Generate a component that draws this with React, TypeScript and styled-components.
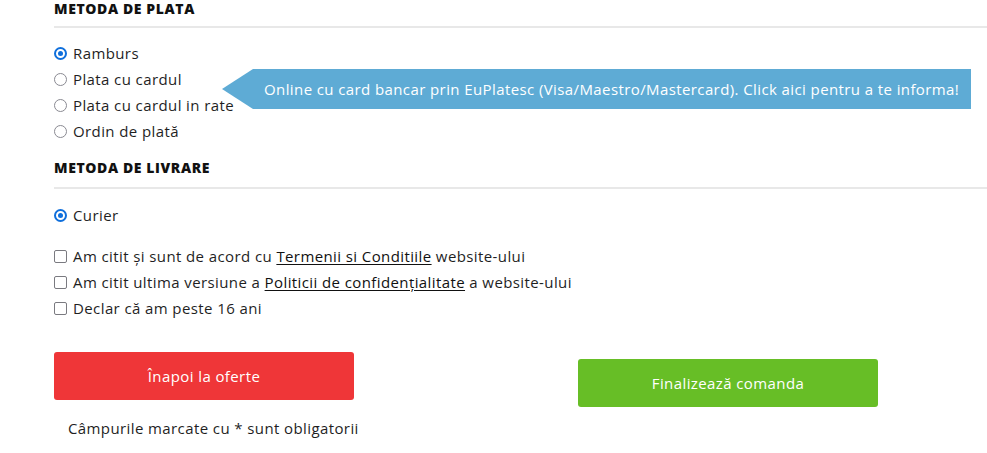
import React from "react";
import styled, { createGlobalStyle } from "styled-components";

const Global = createGlobalStyle`
  html, body { margin: 0; padding: 0; background: #fff; }
  body {
    font-family: "Open Sans", "Noto Sans", Arial, sans-serif;
    color: #1f1f1f;
    letter-spacing: 0.4px;
  }
  * { box-sizing: border-box; }
`;

const Page = styled.div`
  width: 987px;
  height: 453px;
  overflow: hidden;
  padding: 0 0 0 54px;
`;

const Heading = styled.h3<{ $top: number; $gap: number }>`
  margin: ${(p) => p.$top}px 0 0;
  padding: 0 0 ${(p) => p.$gap}px;
  font-size: 14px;
  line-height: 18px;
  font-weight: 800;
  letter-spacing: 0.6px;
  color: #111;
  border-bottom: 2px solid #e8e8e8;
`;

const OptionList = styled.div<{ $top: number }>`
  position: relative;
  display: flex;
  flex-direction: column;
  margin-top: ${(p) => p.$top}px;
`;

const Row = styled.label`
  display: flex;
  align-items: center;
  gap: 6px;
  height: 26px;
  font-size: 15px;
  color: #1f1f1f;
`;

const Text = styled.span`
  white-space: pre;
`;

const Radio = styled.span<{ $checked?: boolean }>`
  width: 13px;
  height: 13px;
  border-radius: 50%;
  flex: none;
  border: ${(p) => (p.$checked ? "2px solid #0f6fdc" : "1px solid #8a8a92")};
  display: flex;
  align-items: center;
  justify-content: center;
  &::after {
    content: "";
    display: ${(p) => (p.$checked ? "block" : "none")};
    width: 5px;
    height: 5px;
    border-radius: 50%;
    background: #0f6fdc;
  }
`;

const Box = styled.span`
  width: 13px;
  height: 13px;
  flex: none;
  border: 1px solid #7a7a80;
  border-radius: 2px;
`;

const Link = styled.a`
  color: #111;
  text-decoration: underline;
  text-underline-offset: 2px;
`;

const Tooltip = styled.div`
  position: absolute;
  left: 168px;
  top: 29px;
  height: 40px;
  display: flex;
  align-items: center;
`;

const Arrow = styled.span`
  width: 0;
  height: 0;
  border-top: 20px solid transparent;
  border-bottom: 20px solid transparent;
  border-right: 31px solid #5eabd5;
`;

const TipBody = styled.div`
  height: 40px;
  width: 718px;
  background: #5eabd5;
  color: #fff;
  font-size: 15px;
  display: flex;
  align-items: center;
  padding-left: 11px;
  white-space: nowrap;
`;

const Actions = styled.div`
  display: flex;
  align-items: flex-start;
  gap: 224px;
  margin-top: 31px;
`;

const LeftCol = styled.div`
  width: 300px;
  flex: none;
  display: flex;
  flex-direction: column;
`;

const Button = styled.button<{ $color: string; $offset?: number }>`
  width: 300px;
  height: 48px;
  flex: none;
  margin-top: ${(p) => p.$offset ?? 0}px;
  border: none;
  border-radius: 3px;
  background: ${(p) => p.$color};
  color: #fff;
  font-family: inherit;
  letter-spacing: inherit;
  font-size: 15px;
`;

const Note = styled.div`
  margin-top: 19px;
  padding-left: 14px;
  font-size: 15px;
  line-height: 18px;
  white-space: nowrap;
  color: #1f1f1f;
`;

export default function App() {
  return (
    <Page>
      <Global />
      <Heading $top={0} $gap={8}>METODA DE PLATA</Heading>
      <OptionList $top={12}>
        <Row><Radio $checked /><Text>Ramburs</Text></Row>
        <Row><Radio /><Text>Plata cu cardul</Text></Row>
        <Row><Radio /><Text>Plata cu cardul in rate</Text></Row>
        <Row><Radio /><Text>Ordin de plată</Text></Row>
        <Tooltip>
          <Arrow />
          <TipBody>Online cu card bancar prin EuPlatesc (Visa/Maestro/Mastercard). Click aici pentru a te informa!</TipBody>
        </Tooltip>
      </OptionList>
      <Heading $top={15} $gap={10}>METODA DE LIVRARE</Heading>
      <OptionList $top={13}>
        <Row><Radio $checked /><Text>Curier</Text></Row>
      </OptionList>
      <OptionList $top={15}>
        <Row><Box /><Text>Am citit și sunt de acord cu <Link>Termenii si Conditiile</Link> website-ului</Text></Row>
        <Row><Box /><Text>Am citit ultima versiune a <Link>Politicii de confidențialitate</Link> a website-ului</Text></Row>
        <Row><Box /><Text>Declar că am peste 16 ani</Text></Row>
      </OptionList>
      <Actions>
        <LeftCol>
          <Button $color="#ef3638">Înapoi la oferte</Button>
          <Note>Câmpurile marcate cu * sunt obligatorii</Note>
        </LeftCol>
        <Button $color="#67be26" $offset={7}>Finalizează comanda</Button>
      </Actions>
    </Page>
  );
}
